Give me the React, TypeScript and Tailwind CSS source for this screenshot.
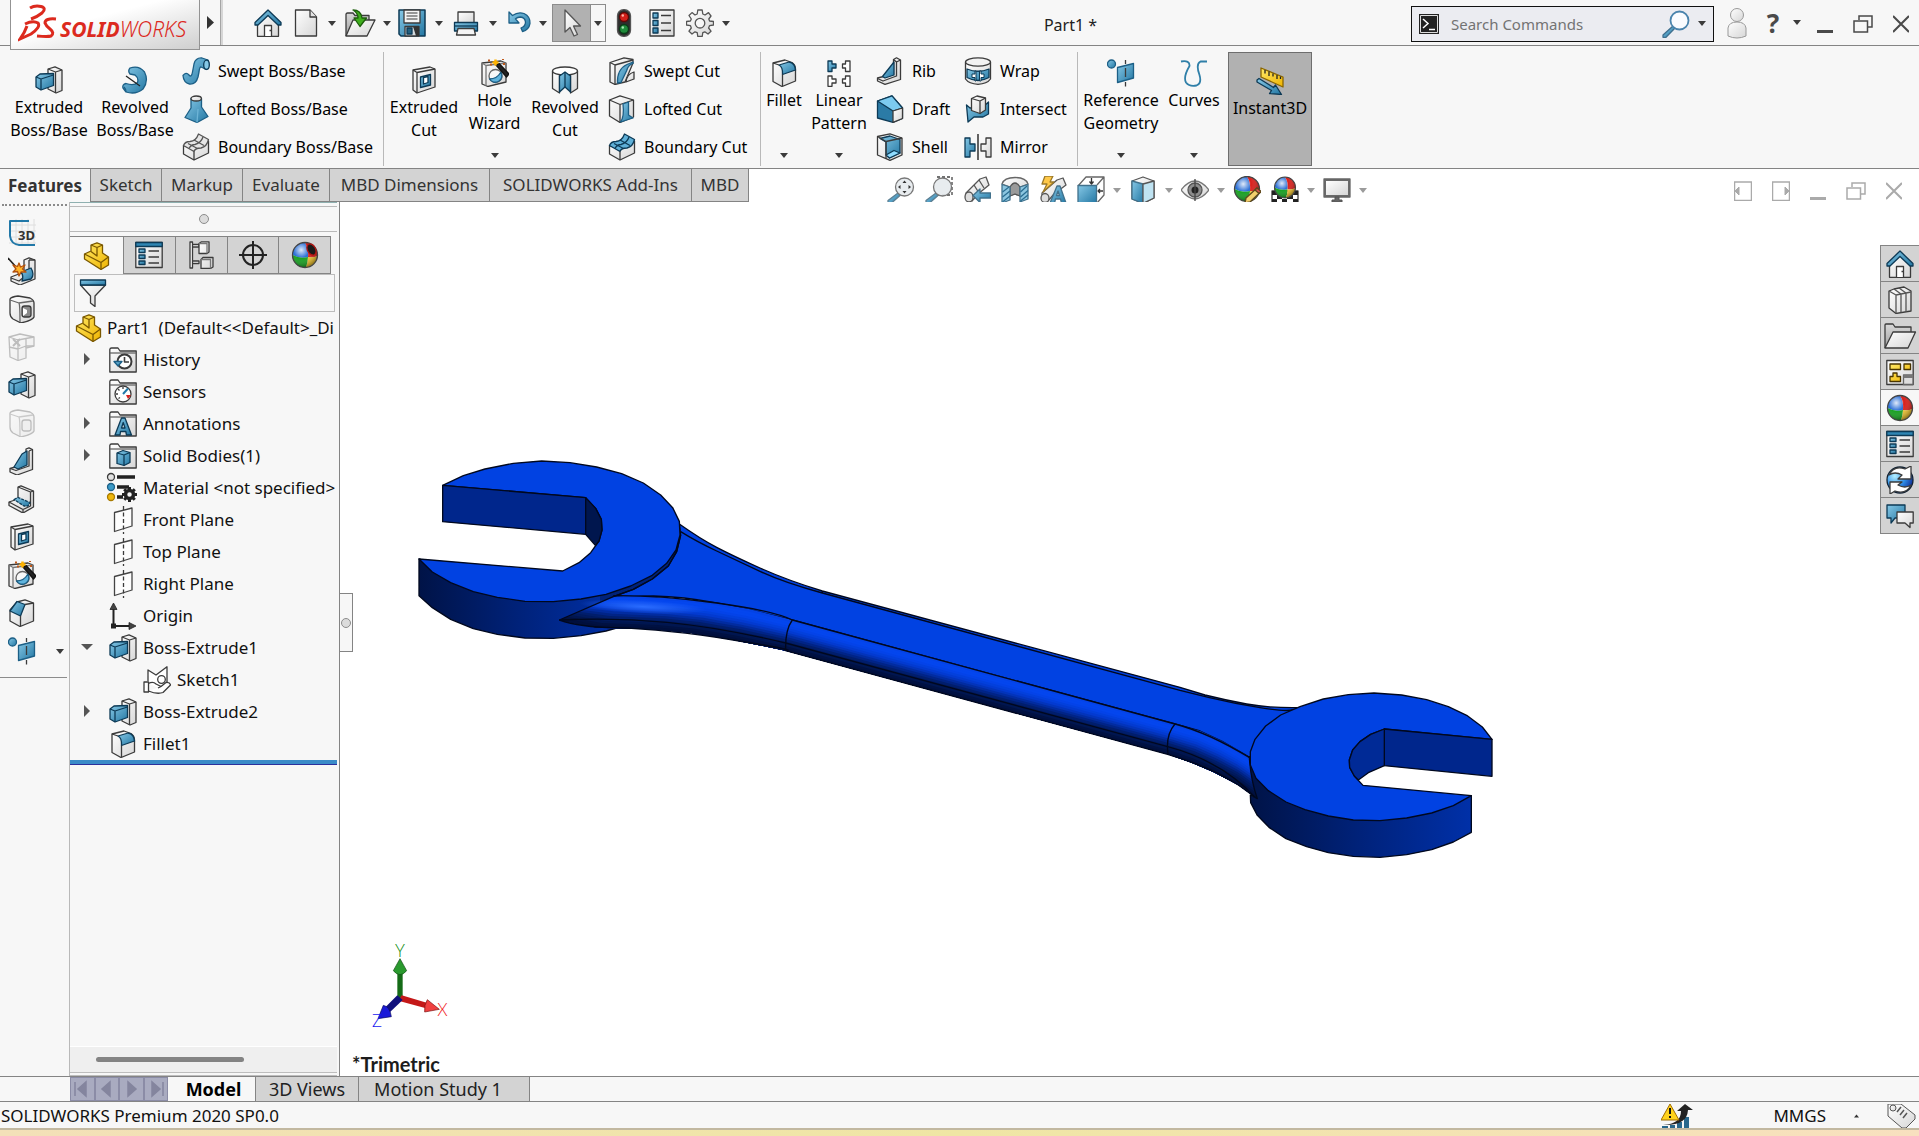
import type { FC, ReactNode } from "react";
import { clsx } from "clsx";

const BLUE = "url(#blue)";
const LIGHT = "url(#light)";
const GOLD = "url(#gold)";
const NAVY = "#0d3a56";

// Gradients shared by every icon on the page
const Gradients: FC = () => (
  <svg className="absolute w-0 h-0" aria-hidden="true">
    <defs>
      <linearGradient id="blue" x1="0" y1="0" x2="1" y2="1">
        <stop offset="0" stopColor="#86c8e6" />
        <stop offset="1" stopColor="#2377a3" />
      </linearGradient>
      <linearGradient id="light" x1="0" y1="0" x2="1" y2="1">
        <stop offset="0" stopColor="#ffffff" />
        <stop offset="1" stopColor="#d6d6d6" />
      </linearGradient>
      <linearGradient id="gold" x1="0" y1="0" x2="1" y2="1">
        <stop offset="0" stopColor="#ffe866" />
        <stop offset="1" stopColor="#efb400" />
      </linearGradient>
      <linearGradient id="gray" x1="0" y1="0" x2="0" y2="1">
        <stop offset="0" stopColor="#d8d8d8" />
        <stop offset="1" stopColor="#a2a2a2" />
      </linearGradient>
      <radialGradient id="shine" cx=".35" cy=".3" r=".7">
        <stop offset="0" stopColor="#fff" stopOpacity=".85" />
        <stop offset=".45" stopColor="#fff" stopOpacity="0" />
        <stop offset="1" stopColor="#000" stopOpacity=".35" />
      </radialGradient>
      <radialGradient id="globe" cx=".3" cy=".35" r=".8">
        <stop offset="0" stopColor="#b5f0ff" />
        <stop offset=".5" stopColor="#2f8fe8" />
        <stop offset="1" stopColor="#0a1f8c" />
      </radialGradient>
    </defs>
  </svg>
);

const Icon: FC<{
  children: ReactNode;
  className?: string;
}> = ({ children, className = "w-7 h-7" }) => (
  <svg
    viewBox="0 0 28 28"
    className={clsx("shrink-0", className)}
    fill="none"
    stroke="#3b3b3b"
    strokeWidth="1.3"
    strokeLinejoin="round"
    aria-hidden="true"
  >
    {children}
  </svg>
);

const HomeIcon = () => (
  <Icon>
    <path d="M3.500 14V27.300H24.500V14L14 4Z" fill={LIGHT} />
    <path d="M14 1 1 13.500V16H4L14 6.500 24 16H27V13.500Z" fill={BLUE} stroke={NAVY} />
    <path d="M10.500 27V16.500H17.500V27" fill="#fff" />
    <path d="M15.500 21.500H17" />
  </Icon>
);

const NewIcon = () => (
  <Icon>
    <path d="M3.500 1H18L24.500 8V27H3.500Z" fill={LIGHT} />
    <path d="M18 1V8H24.500" fill="#e4e4e4" />
  </Icon>
);

const OpenIcon = () => (
  <Icon className="w-8 h-7">
    <path d="M0 27V5.500Q0 4 1.500 4H7L9 6.500H23V11" fill="url(#gray)" />
    <path d="M0 27 7 11H29L21 27Z" fill={LIGHT} />
    <path d="M7 1Q15 1 16 9H20.500L14 17.500 8 9H12Q12 4 7 1Z" fill="#3fae1d" stroke="#1d5e0c" />
  </Icon>
);

const SaveIcon = () => (
  <Icon>
    <path d="M1 1H27V27H3L1 25Z" fill={BLUE} stroke={NAVY} strokeWidth="1.500" />
    <path d="M6 1H22V14H6Z" fill="#f4f4f4" />
    <path d="M8.500 4H19.500M8.500 7H19.500M8.500 10H19.500" stroke="#777" />
    <path d="M7 17.500H21V27H7Z" fill="#d4dadd" />
    <path d="M9 19H14V25H9Z" fill="#23607f" stroke={NAVY} />
    <path d="M15 17.500H21V27H18Z" fill="#333" stroke="none" />
  </Icon>
);

const PrintIcon = () => (
  <Icon>
    <path d="M6 14V3H22V14" fill={LIGHT} />
    <path d="M2.500 13.500H25.500V22H2.500Z" fill={BLUE} stroke={NAVY} />
    <path d="M3 17H25" stroke={NAVY} />
    <path d="M6 19.500H22L23.500 26H4.500Z" fill="#f5f5f5" />
  </Icon>
);

const UndoIcon = () => (
  <Icon>
    <path
      d="M3 14V3L6.500 6.500Q12 2.500 18 4.500 24.500 7.500 24 14.500 23 21 16.500 22.500L15 19Q19.500 17.500 19.500 13 19 8.500 14.500 8 11.500 8 9.500 9.800L13 14Z"
      fill={BLUE}
      stroke="#1c5f86"
    />
  </Icon>
);

const CursorIcon = () => (
  <Icon>
    <path d="M7 1V23L12 18.500 16 27 19.500 25.500 15.500 17H22.500Z" fill={LIGHT} stroke="#555" />
  </Icon>
);

const TrafficIcon = () => (
  <Icon>
    <rect x="7.500" y=".7" width="13" height="26.600" rx="6" fill="#2e2e2e" stroke="#555" />
    <circle cx="14" cy="8" r="4.500" fill="#d3201a" stroke="#5c0907" />
    <circle cx="14" cy="20" r="4.500" fill="#1f8b3b" stroke="#0b3a18" />
    <circle cx="12.800" cy="6.500" r="1.200" fill="#ffb3a8" stroke="none" />
    <circle cx="12.800" cy="18.500" r="1.200" fill="#a8e8b8" stroke="none" />
  </Icon>
);

const OptionsIcon = () => (
  <Icon>
    <path d="M2 1H26V27H2Z" fill={LIGHT} />
    <path d="M5 4H10V9H5ZM5 11.500H10V16.500H5ZM5 19H10V24H5Z" fill={BLUE} stroke={NAVY} />
    <path d="M13 6.500H23M13 14H23M13 21.500H23" />
  </Icon>
);

const GearIcon = () => (
  <Icon>
    <path
      d="M11.800 1H16.200L16.800 5 19 6 22.500 3.600 25 7 22.800 10 23.600 12 27.500 12.500V16L23.600 16.600 22.600 19 25 22.200 22 25 18.800 22.800 16.800 23.600 16.200 27.500H11.800L11.200 23.600 9 22.800 6 25 3 22.200 5.300 19 4.400 16.600.5 16V12.500L4.400 12 5.300 10 3 6.500 6 3.600 9 6 11.200 5Z"
      fill={LIGHT}
      stroke="#555"
    />
    <circle cx="14" cy="14.200" r="4.800" fill="#f7f7f7" stroke="#555" />
  </Icon>
);

const ExtrudeIcon = () => (
  <Icon>
    <path d="M13 3 20 .800 27 4V24.500L21 27 13 23Z" fill={LIGHT} />
    <path d="M13 3 20.500 6V27M20.500 6 27 4" />
    <path d="M1 11 5 8 18.500 7.500V19.500L6 24 1 21Z" fill={BLUE} stroke={NAVY} />
    <path d="M1 11 6 13V24M6 13 18.500 9" stroke={NAVY} />
  </Icon>
);

const RevolveIcon = () => (
  <Icon>
    <path
      d="M9 2Q18-1 23.500 6 28 15 22 23 15 29 5 26L2 22Q1 18.500 5 17.500 13 20 16.500 16.500 18 12 14 9L9 8Q6.500 5 9 2Z"
      fill={BLUE}
      stroke="#1c5f86"
    />
    <path d="M5 10 19 20" stroke="#222" />
    <path d="M3 21Q5 23 5 26" stroke="#1c5f86" />
  </Icon>
);

const SweptIcon = () => (
  <Icon>
    <path
      d="M1 18.500Q4 14.500 7 18 9.500 21 10.500 15L12 7Q13.500.500 20 1L26 3 27 8 24.500 12.500 19 10Q17.500 10 17 15L16 20Q14 27.500 7.500 27 1.500 25.500 1 18.500Z"
      fill={BLUE}
      stroke="#1c5f86"
    />
    <ellipse cx="24.500" cy="7.800" rx="2.800" ry="4.600" fill="#86c8e6" stroke={NAVY} />
  </Icon>
);

const LoftIcon = () => (
  <Icon>
    <path d="M9 3.500V13L3 22.500 15 27.500 26 21.500 19.500 12V3.500Z" fill={BLUE} stroke="#1c5f86" />
    <path d="M15 27.500 16 14" stroke="#6db4d6" />
    <ellipse cx="14.200" cy="3.500" rx="5.200" ry="2.500" fill={LIGHT} />
  </Icon>
);

const Patch: FC<{ fill: string; stroke?: string }> = ({
  fill,
  stroke = "#555",
}) => (
  <Icon>
    <path d="M1.500 12.500 1.500 21 12 27 26.500 20V8L12 17Z" fill={LIGHT} />
    <path
      d="M1.500 12.500Q3 8.500 8 8.500 14 8 16.500 1L26.500 6.500Q25 13.500 19 15 13 15 12 18.500Z"
      fill={fill}
      stroke={stroke}
    />
    <path d="M6 10.500 15.500 15.500M12 7 22 12.500M7 15.500Q9 11.500 13 11.500 19 10 21 4" stroke={stroke} />
    <path d="M12 18.500V27" />
  </Icon>
);

const CutIcon = () => (
  <Icon>
    <path d="M3 4 20 1 25 3V21L7 27 3 24Z" fill={LIGHT} />
    <path d="M3 4 7 6.500V27M7 6.500 25 3" />
    <path d="M10.500 11 20.500 8.500V19L10.500 21.500Z" fill={BLUE} stroke={NAVY} />
    <path d="M13.500 11.500 18 10.500V16.500L13.500 18Z" fill="#fff" stroke={NAVY} />
  </Icon>
);

const HoleWizardIcon = () => (
  <Icon>
    <path d="M1 4 20 2 25 4V23L7 27.500 1 25Z" fill={LIGHT} />
    <path d="M1 4 5 6.500V27M5 6.500 25 4" stroke="#777" />
    <circle cx="14.500" cy="17" r="6.500" fill="#f8f8f8" stroke="#666" />
    <path d="M20 13A6.500 6.500 0 1 1 8.500 20Q16 20 20 13Z" fill="#5fb3dc" stroke="#1c5f86" />
    <path d="M15 6 18 4.500 28 15 25.500 18Z" fill="#222" stroke="#111" />
    <path d="M14.500.5V6.500M11.500 3.500H17.500" stroke="#ffb300" strokeWidth="2.500" />
    <path d="M7 1.500H9M21 0H23M22 5H24M9 5.500H11" stroke="#c0591a" strokeWidth="2" />
  </Icon>
);

const RevolvedCutIcon = () => (
  <Icon>
    <path d="M1.500 5V22.500L8.500 27V9L14 7 19.500 9V27L26.500 22.500V5" fill={LIGHT} />
    <ellipse cx="14" cy="5" rx="12.500" ry="4" fill="#fff" />
    <path d="M8.500 10 14 6 19.500 10V26L14 21 8.500 26Z" fill={BLUE} stroke={NAVY} />
    <path d="M14 6V21" stroke={NAVY} />
  </Icon>
);

const SweptCutIcon = () => (
  <Icon>
    <path d="M2 5.500 16 .8 25 2.500V6L17 25 7 27.500 2 25Z" fill={LIGHT} />
    <path d="M2 5.500 7 8V27.500M7 8 25 3" />
    <path d="M25 6.500Q20 8 18.500 14L13 25.500 9.500 26Q9 12 19 7.500L25 5Z" fill={BLUE} stroke="#1c5f86" />
    <path d="M26 15Q19 17 18 25L26 22Z" fill={LIGHT} />
  </Icon>
);

const LoftedCutIcon = () => (
  <Icon>
    <path d="M1.500 5 12 .8 25.500 5V22L12 27.500 1.500 21Z" fill={LIGHT} />
    <path d="M1.500 5 12 9.500V27.500M12 9.500 25.500 5" />
    <path d="M15 9 20.500 7V20L25 23 12.500 27Q16.500 22 15 9Z" fill={BLUE} stroke="#1c5f86" />
  </Icon>
);

const FilletIcon = () => (
  <Icon>
    <path d="M3 4 15 1 22 3.500Q25.500 6 25.500 10V22L12 27.500 3 22.500Z" fill={LIGHT} />
    <path d="M9 6 19 3Q25 4 25.500 11L12.500 15.500Q13 8 9 6Z" fill={BLUE} stroke={NAVY} />
    <path d="M3 4 9 6M12.500 15.500V27" />
  </Icon>
);

const LinearPatternIcon = () => (
  <Icon>
    <path d="M3 2H7V5H11V9H7V12.500H3Z" fill={BLUE} stroke={NAVY} />
    <path d="M17.500 5H20.500V2H25V12.500H20.500V9H17.500ZM3 17H7V20H11V24H7V27.300H3ZM17.500 20H20.500V17H25V27.300H20.500V24H17.500Z" fill="#fff" />
  </Icon>
);

const RibIcon = () => (
  <Icon>
    <path d="M17.500 2.500 20.500 .8 24.500 3V22.500L9 27.300 1.500 24V21L17.500 17Z" fill={LIGHT} />
    <path d="M17.500 2.500 20.500 5V19L7 24 1.500 21.500M20.500 5 24.500 3" />
    <path d="M18 5V18L9 21 6.500 19.500Z" fill={BLUE} stroke={NAVY} />
  </Icon>
);

const DraftIcon = () => (
  <Icon>
    <path d="M1.500 6 16 .8 26.500 13V23.500L17 27.300 1.500 23Z" fill="#2b7ba6" stroke={NAVY} />
    <path d="M1.500 6 16 .8 26.500 13 17 16Z" fill="#7ccbf0" stroke={NAVY} />
    <path d="M17 16 26.500 13V23.500L17 27.300Z" fill={LIGHT} />
  </Icon>
);

const ShellIcon = () => (
  <Icon>
    <path d="M1.500 3.500 14 .8 26 5V22L14 27.300 1.500 22Z" fill={LIGHT} />
    <path d="M4 5.500 14 3 24 6.500V20L13.500 25 10 22V9Z" fill={BLUE} stroke={NAVY} />
    <path d="M10 22 18 17.500 24 20 13.500 25Z" fill="#8fdcff" stroke={NAVY} />
    <path d="M1.500 3.500 10 8.500V26M10 8.500 26 5" />
  </Icon>
);

const WrapIcon = () => (
  <Icon>
    <path d="M1.500 5V22Q5 27 14 27.300 23 27 26.500 22V5" fill={LIGHT} />
    <ellipse cx="14" cy="5" rx="12.500" ry="4.200" fill="#f2f2f2" />
    <path d="M3 12Q14 16.500 25 12V20.500Q14 26.500 3 20.500Z" fill={BLUE} stroke={NAVY} />
    <path d="M11 14V17H8V20.500H11V24H12V14ZM17 14V17H20V20.500H17V24H15.500V14Z" fill="#fff" stroke={NAVY} strokeWidth="1" />
  </Icon>
);

const IntersectIcon = () => (
  <Icon>
    <path d="M2.500 10 6 13 19 12 24.500 7V19L19 22 10 22 4 27Z" fill={BLUE} stroke={NAVY} />
    <path d="M7.500 3.500 13 1 21.500 3V15L16 18.500 7.500 15.500Z" fill={LIGHT} />
    <path d="M7.500 3.500 16 6V18.500M16 6 21.500 3" />
  </Icon>
);

const MirrorIcon = () => (
  <Icon>
    <path d="M1 5H6V11H11V18H6V24H1Z" fill={BLUE} stroke={NAVY} />
    <path d="M27 5H22V11H17V18H22V24H27Z" fill={LIGHT} />
    <path d="M14 1V27" stroke="#111" />
  </Icon>
);

const GeometryIcon = () => (
  <Icon>
    <circle cx="4.500" cy="5" r="4" fill={BLUE} stroke="#1c5f86" />
    <path d="M10.500 8.500 26.500 4.500V19L10.500 23.500Z" fill={BLUE} stroke="#1c5f86" />
    <path d="M18.500 1V5M18.500 9V18M18.500 23V27.500" />
  </Icon>
);

const CurvesIcon = () => (
  <Icon>
    <path
      d="M1 2.500Q10 1 9.500 7 3 18 6 23.500 9.500 28 16.500 26.500 22 24.500 19.500 16 15.500 5 20.500 2.500L27 2.500"
      stroke="#2f7fa8"
      strokeWidth="1.800"
    />
  </Icon>
);

const Instant3DIcon = () => (
  <Icon>
    <path d="M5 1 27 10V20L5 10Z" fill={GOLD} stroke="#8a6500" />
    <path d="M9 3V6.500M13 4.500V9M17 6.500V9.500M21 8V12M24.500 9.500V12" stroke="#222" />
    <path d="M1 13 3 11.500 17.500 20.500 19.500 18 25.500 27.500 13.500 26.500 15.500 23.500 1 15Z" fill={BLUE} stroke={NAVY} />
  </Icon>
);

const ZoomFitIcon: FC<{ area?: boolean }> = ({ area }) => (
  <Icon>
    {area && <path d="M12 1H27V19H12" strokeDasharray="3 2" stroke="#444" />}
    <path d="M11 17 13 19.500 4 27.500 1 27 1 24.500Z" fill={BLUE} stroke="#5d7f92" />
    <circle cx="17.500" cy="11" r="9" fill="#e6eaed" fillOpacity=".9" stroke="#777" />
    {!area && (
      <path
        d="M17.500 4.500 19.500 7H15.500ZM17.500 17.500 19.500 15H15.500ZM11 11 13.500 9V13ZM24 11 21.500 9V13Z"
        fill="#333"
        stroke="none"
      />
    )}
  </Icon>
);

const PreviousViewIcon = () => (
  <Icon>
    <path d="M17 3 23 1 26 9 15 18 9 25 3 22 3 17Z" fill={LIGHT} stroke="#555" />
    <path d="M16 4 21 12M11 9 16 17" stroke="#555" />
    <ellipse cx="6" cy="21" rx="4" ry="5" fill="#ddd" stroke="#555" />
    <path d="M10 19.500 17 13V17H27.500V22H17V26.500Z" fill={BLUE} stroke="#41718c" />
  </Icon>
);

const SectionIcon = () => (
  <Icon>
    <path d="M1 8Q3 1.500 14 1.500 25 1.500 27 8L19 11V20L14 18 9 20V11Z" fill={LIGHT} stroke="#666" />
    <path d="M9 11Q14 3 19 11V20L14 18 9 20Z" fill="#9a9a9a" stroke="#555" />
    <path d="M1 8.500 9 11V24L1 27ZM19 11 27 8.500V23L19 26Z" fill="#8cc6e0" stroke="#41718c" />
    <path d="M1.500 16 8 11M1.500 21 9 15M1.500 26 9 20M19.500 16 26 10M19.500 21 27 14.500M19.500 25 27 19" stroke="#2b6e92" />
  </Icon>
);

const AnnotationViewIcon = () => (
  <Icon>
    <path d="M18 4 24 2 27 9 15 18 9 25 3 22 3 17Z" fill={LIGHT} stroke="#555" />
    <ellipse cx="6" cy="22" rx="4" ry="4.500" fill="#ddd" stroke="#555" />
    <path d="M6 0H14L11 6H15L4 16 8 8H3Z" fill="#ffc94a" stroke="#9c7a2a" />
    <path d="M11 27 18 10H21L27 27H22.500L21.500 23H16.500L15.500 27ZM17.500 19.500H20.500L19 15Z" fill={BLUE} stroke="#41718c" />
  </Icon>
);

const OrientationIcon = () => (
  <Icon>
    <path d="M1 10 9 1H27V19L20 27M20 9 27 1" stroke="#666" />
    <path d="M1 9.500H19.500V27H1Z" fill={BLUE} stroke="#41718c" />
    <path d="M14.500 2V8M12.500 5.500 14.500 8 16.500 5.500M26 15H21M23 13 21 15 23 17" stroke="#333" />
  </Icon>
);

const DisplayStyleIcon = () => (
  <Icon>
    <path d="M3 5 14 1 25 5V22L14 27.300 3 23Z" fill={LIGHT} stroke="#555" />
    <path d="M3 5 14 8V27.300L3 23Z" fill={BLUE} stroke="#41718c" />
    <path d="M14 8 25 5V22L14 27.300Z" fill="#bfe3f2" stroke="#555" />
  </Icon>
);

const EyeIcon = () => (
  <Icon>
    <path d="M0 14Q7 5 14 5 21 5 28 14 21 23 14 23 7 23 0 14Z" fill={LIGHT} stroke="#777" />
    <circle cx="14" cy="14" r="7" fill="#8c8c8c" stroke="#555" />
    <circle cx="14" cy="14" r="3.500" fill="#222" stroke="none" />
    <path d="M14 3V25" stroke="#444" />
  </Icon>
);

const Ball: FC<{ r?: number; cy?: number }> = ({ r = 12.5, cy = 14 }) => (
  <g transform={`translate(14 ${cy}) scale(${r / 12.5})`} stroke="none">
    <path d="M-12.500 0A12.500 12.500 0 0 1 0-12.500Q4-6 3 2-5 4-12.500 0Z" fill="#2b6fd6" />
    <path d="M0-12.500A12.500 12.500 0 0 1 12.500 1Q8 3 3 2 4-6 0-12.500Z" fill="#d8201c" />
    <path d="M-12.500 0A12.500 12.500 0 0 0 1 12.500Q3 7 3 2-5 4-12.500 0Z" fill="#17a021" />
    <path d="M12.500 1A12.500 12.500 0 0 1 1 12.500Q3 7 3 2 8 3 12.500 1Z" fill="#f0c431" />
    <circle r="12.500" fill="url(#shine)" stroke="#444" />
  </g>
);

const BallIcon: FC<{ hole?: boolean }> = ({ hole }) => (
  <Icon>
    <Ball />
    {hole && <ellipse cx="20.500" cy="8.500" rx="4" ry="6" fill="#1a1a1a" stroke="#b01512" transform="rotate(-30 20.5 8.5)" />}
  </Icon>
);

const AppearanceIcon = () => (
  <Icon>
    <Ball cy={13} />
    <path d="M12 27 13 22 24 12 28 15.500 17 26Z" fill="#f2cf6d" stroke="#5e4a1c" />
    <path d="M24 12 28 15.500 26 17.500 22 14Z" fill="#d9534f" stroke="#5e4a1c" />
  </Icon>
);

const SceneIcon = () => (
  <Icon>
    <path d="M1 15H27V27.500H1Z" fill="#fff" />
    <path d="M1 15H6V19H1ZM11 15H16V19H11ZM22 15H27V19H22ZM6 19H11V23H6ZM16 19H22V23H16ZM1 23H6V27.500H1ZM11 23H16V27.500H11ZM22 23H27V27.500H22Z" fill="#222" stroke="none" />
    <Ball r={10.5} cy={11.5} />
  </Icon>
);

const MonitorIcon = () => (
  <Icon>
    <path d="M1 3H27V21H1Z" fill="#6a6a6a" stroke="#666" />
    <path d="M3 5H25V19H3Z" fill={LIGHT} stroke="none" />
    <path d="M12 21H16V24H19V26H9V24H12Z" fill="#666" stroke="#555" strokeWidth="1" />
  </Icon>
);

const Sketch3DIcon = () => (
  <Icon>
    <path d="M8 0V27M14 0V27M20 0V27M26 0V27M1 6H28M1 12H28M1 18H28M1 24H28" stroke="#dedede" strokeWidth="1" />
    <path d="M21 2H2V17Q3 25 11 26H27" stroke="#2178a8" strokeWidth="2" />
    <text x="10" y="21" fontSize="13" fontWeight="700" fill="#333" stroke="none" fontFamily="Noto Sans, sans-serif">
      3D
    </text>
  </Icon>
);

const WeldIcon = () => (
  <Icon>
    <path d="M16 3 21 .8 27 3V22L12 28 3 24V20L16 15Z" fill={LIGHT} />
    <path d="M21 3V16L11 24 3 21M21 3 27 3" />
    <path d="M13 15 23 11Q27 18 23 22L14 24Q16 19 13 15Z" fill={BLUE} stroke={NAVY} />
    <path d="M0 1 9 11" stroke="#222" strokeWidth="1.600" />
    <path d="M11 6 12.500 10 17 8 14.500 12 18 15 13 15 11 19 9.500 14.500 5 15 8 12 5 8 9.500 9.500Z" fill="#ffb52b" stroke="#b3510d" />
  </Icon>
);

const BoxIcon: FC<{ ghost?: boolean }> = ({ ghost }) => (
  <Icon className={clsx("w-7 h-7", ghost && "opacity-30")}>
    <path d="M2 4Q3 2 10 1L22 3Q26 5 26 8V22Q25 25 13 28L5 24Q2 22 2 18Z" fill={LIGHT} />
    <path d="M2 5 11 8 25 6M11 8Q12 10 12 27" stroke="#666" />
    <rect x="14" y="11" width="9" height="11" rx="2.500" fill={ghost ? "#ddd" : "#8a8a8a"} />
    {!ghost && <path d="M15 13 19 15V18L15 21Z" fill="#fff" stroke="none" />}
  </Icon>
);

const GhostPatternIcon = () => (
  <Icon className="w-7 h-7 opacity-30">
    <path d="M1 4 12 1 26 4V13L18 15V25L10 27.500 2 24Z" fill={LIGHT} />
    <path d="M1 14 10 16 18 13 26 13M10 6V27M18 5V15M1 4 10 7 26 4" />
    <path d="M5 6 12 13M12 6 5 13" strokeWidth="2" />
  </Icon>
);

const BaseFlangeIcon = () => (
  <Icon>
    <path d="M10 2 13 .8 25.500 6V22L15 28 1 20.500V17L10 14Z" fill={LIGHT} />
    <path d="M10 2 22.500 7V21L15 24.500 1 17M22.500 7 25.500 6M15 24.500V28" />
    <path d="M6 14.500 10 12.500 22 17.500 20 21 16 21Z" fill={BLUE} stroke={NAVY} strokeDasharray="3 1" />
  </Icon>
);

const RibBlueIcon = () => (
  <Icon>
    <path d="M18 2 21 .8 24.500 2.500V22.500L9 28 2 25V21.500L18 17Z" fill={LIGHT} />
    <path d="M21 4V19L8 23.500 2 21.500M21 4 24.500 2.500" />
    <path d="M14 7 19 4V18L10 22 6 20Z" fill={BLUE} stroke={NAVY} />
  </Icon>
);

const ChamferIcon = () => (
  <Icon>
    <path d="M9 3 17 .8 25.500 4V22L12 27.500 2 22V11Z" fill={LIGHT} />
    <path d="M9 2.500 17 5.500 12.500 17 2 12Z" fill={BLUE} stroke={NAVY} />
    <path d="M17 5.500 25.500 4M12.500 17V27" />
  </Icon>
);

const PartIcon = () => (
  <Icon>
    <path d="M1.500 12 8 9V3L14 .8 19.500 3V11L25.500 15V23L18 27.500 1.500 17Z" fill={GOLD} stroke="#7a5800" />
    <path d="M8 3 14 5.500 19.500 3M14 5.500V14L8 9.500M1.500 12 18 20.500 25.500 15M18 20.500V27.500" stroke="#7a5800" />
  </Icon>
);

const PropertyIcon = () => (
  <Icon>
    <path d="M.8 1.500H27.200V26.500H.8Z" fill={LIGHT} />
    <path d="M.8 1.500H27.200V5.500H.8Z" fill="#2f86b3" stroke={NAVY} />
    <path d="M4 8H10V11.500H4ZM4 14H10V17.500H4ZM4 20H10V23.500H4Z" fill={BLUE} stroke={NAVY} />
    <path d="M13.500 10H24M13.500 16H24M13.500 22H24" />
  </Icon>
);

const ConfigIcon = () => (
  <Icon>
    <path d="M3 1H5.500V27H3ZM5.500 3.500H12V6H5.500ZM5.500 20H12V22.500H5.500Z" fill="#fff" />
    <path d="M12 2.500 14.500 .8H22V11L20 12.500H12ZM14 18.500 16 16.500H26V26L23.500 27.500H14Z" fill={LIGHT} />
    <path d="M12 2.500H20V12.500M14 18.500H23.500V27.500" stroke="#777" />
  </Icon>
);

const CrosshairIcon = () => (
  <Icon>
    <circle cx="14" cy="14" r="10" strokeWidth="2" stroke="#222" />
    <path d="M14 0V28M0 14H28" strokeWidth="2" stroke="#222" />
  </Icon>
);

const FilterIcon = () => (
  <Icon>
    <path d="M1.500 6 11.500 17V24L16 27.500V17L26.500 6Z" fill={LIGHT} />
    <path d="M1.500 1H26.500V6H1.500Z" fill={BLUE} stroke={NAVY} />
  </Icon>
);

const Folder: FC<{ children: ReactNode }> = ({ children }) => (
  <Icon>
    <path d="M.8 26V3.500Q1 2 2.500 2H9L11 5H27.200V26Z" fill={LIGHT} />
    <path d="M1 7H27" stroke="#666" />
    {children}
  </Icon>
);

const HistoryIcon = () => (
  <Folder>
    <circle cx="15.500" cy="15.500" r="7" fill="#fff" strokeWidth="2" />
    <path d="M15.500 11V16H20" strokeWidth="1.600" />
    <path d="M5 15.500H13L9 20Z" fill={BLUE} stroke="#1c5f86" />
  </Folder>
);

const SensorIcon = () => (
  <Folder>
    <circle cx="14" cy="16" r="8" fill="#fff" />
    <path d="M14 16 19 10.500" stroke="#2178a8" strokeWidth="2" />
    <path d="M17 17H22L19 21Z" fill="#d8201c" stroke="none" />
    <path d="M14 9V11M7 16H9M9 11 10.500 12.500M9.500 20.500 11 19.500" />
  </Folder>
);

const LetterIcon = () => (
  <Folder>
    <path d="M6 25 12.500 8H16L22.500 25H17.500L16.800 21.500H11.500L11 25ZM12.500 18H16L14.200 12.500Z" fill={BLUE} stroke={NAVY} />
  </Folder>
);

const BodiesIcon = () => (
  <Folder>
    <path d="M8 11 14 8.500 21 10.500V20.500L15 23.500 8 21.500Z" fill={BLUE} stroke={NAVY} />
    <path d="M8 11 15 13V23.500M15 13 21 10.500" stroke={NAVY} />
  </Folder>
);

const MaterialIcon = () => (
  <Icon className="w-7 h-7 overflow-visible">
    <circle cx="2" cy="3" r="3.500" fill="#e3e3e3" />
    <circle cx="2" cy="13" r="3.500" fill="#3b9bc9" stroke="#1c5f86" />
    <circle cx="2" cy="23" r="3.500" fill="#f0b80c" stroke="#a87a00" />
    <path d="M8 3H26M8 13H20M8 23H14" stroke="#222" strokeWidth="3.500" />
    <path d="M20.500 13V28M13 20.500H28M15.200 15.200 25.800 25.800M25.800 15.200 15.200 25.800" stroke="#222" strokeWidth="3" />
    <circle cx="20.500" cy="20.500" r="4" fill="#f7f7f7" stroke="#222" strokeWidth="3.500" />
  </Icon>
);

const PlaneIcon = () => (
  <Icon>
    <path d="M5.500 6.500 23 2V20L5.500 25.500Z" fill="#fdfdfd" stroke="#444" />
    <path d="M14.500 0V28" strokeDasharray="4 2.500" />
  </Icon>
);

const OriginIcon = () => (
  <Icon>
    <path d="M4.500 24V6M6 24H22" stroke="#222" strokeWidth="2" />
    <path d="M1 7.500 4.500 1 8 7.500ZM20 20.500 27 24 20 27.500Z" fill="#444" stroke="#222" strokeWidth=".8" />
    <path d="M2 21.500H7V26.500H2Z" fill="#222" stroke="none" />
  </Icon>
);

const SketchIcon = () => (
  <Icon>
    <path d="M5 15V4L13 9 24 .8V20" fill="#fff" />
    <circle cx="18.500" cy="13.500" r="3.800" fill="#fff" />
    <path d="M1 16H5.500V26H1ZM5.500 17.500Q10 15 13 18L18 20.500 15 22M18 20.500 23 16.500Q27 16 27.500 19L20 26.500Q14 28.500 5.500 25" fill="#fff" />
  </Icon>
);

const BooksIcon = () => (
  <Icon>
    <path d="M3 5 8 3 13 2 18 1 25 5V25L10 27.500 3 22Z" fill={LIGHT} />
    <path d="M3 5 10 9V27.500M10 9 25 6M8 3 15 8V26.500M13 2 20 7V26" stroke="#555" />
  </Icon>
);

const FolderOpenIcon = () => (
  <Icon className="w-8 h-7 overflow-visible">
    <path d="M-1 26V3Q-1 2 0 2H7L9 5H25V10" fill="url(#gray)" />
    <path d="M-1 26 7 10H29.500L22 26Z" fill={LIGHT} />
  </Icon>
);

const PaletteIcon = () => (
  <Icon>
    <path d="M.8 2.500H27.200V26.500H.8Z" fill={LIGHT} />
    <path d="M4 6H14.500V11.500H4ZM18 6H24.500V11.500H18ZM4 23.500V18.500H7V15H11V18.500H14.500V23.500Z" fill={GOLD} stroke="#4a3500" />
    <path d="M17.500 17H27V26.500H17.500Z" fill="#ddd" stroke="#666" />
    <path d="M17.500 17H27V20H17.500Z" fill="#777" stroke="none" />
  </Icon>
);

const SyncIcon = () => (
  <Icon>
    <circle cx="14" cy="14" r="13" fill="url(#globe)" stroke="#123" />
    <path d="M3 9Q8-1 19 3L25 0V13H12L16 9Q9 5 3 9ZM25 19Q20 29 9 25L4 28V16H16L12 19Q19 23 25 19Z" fill="#fff" />
  </Icon>
);

const ChatIcon = () => (
  <Icon>
    <path d="M1 3H19V16H9L5 21V16H1Z" fill={BLUE} stroke={NAVY} />
    <path d="M11 10H27.200V21H24V25.500L19 21H11Z" fill={LIGHT} />
  </Icon>
);

const Caret: FC<{ className?: string }> = ({ className = "text-[#3b3b3b]" }) => (
  <svg viewBox="0 0 8 5" className={clsx("w-2 h-[5px] shrink-0", className)} fill="currentColor" aria-hidden="true">
    <path d="M0 0H8L4 5Z" />
  </svg>
);

const IconButton: FC<{
  label: string;
  children: ReactNode;
  className?: string;
}> = ({ label, children, className }) => (
  <button aria-label={label} className={clsx("flex items-center justify-center", className)}>
    {children}
  </button>
);

const Logo: FC = () => (
  <div className="relative z-10 flex self-start w-[190px] h-[50px] pl-[7px] shrink-0 border border-t-0 border-[#939393] bg-linear-to-br from-white from-40% to-[#cfcfcf] text-[#dc2a1e]">
    <svg viewBox="0 0 40 46" className="w-10 h-[46px] shrink-0" fill="none" stroke="currentColor" strokeWidth="3" aria-hidden="true">
      <path d="M12 8Q17 5 23 6.500 29 8 24 13 19 17 13 19" />
      <path d="M7 24Q15 20 20 23 23 27 13 34L2 39Q7 32 9 26" />
      <path d="M38 19Q27 18 27 23 28 26 32 29 37 33 33 36 30 37 19 36" />
    </svg>
    <span className="pt-[13px] ml-[2px] text-[21px] leading-8 italic">
      <b>SOLID</b>
      <span className="font-light">WORKS</span>
    </span>
  </div>
);

const WindowButtons: FC<{ className?: string }> = ({ className }) => (
  <div className={clsx("flex items-center gap-5", className)}>
    <IconButton label="Minimize" className="w-4 h-5">
      <svg viewBox="0 0 16 20" className="w-4 h-5" fill="currentColor">
        <path d="M0 16H16V19H0Z" />
      </svg>
    </IconButton>
    <IconButton label="Restore" className="w-5 h-5">
      <svg viewBox="0 0 20 20" className="w-5 h-5" fill="none" stroke="currentColor" strokeWidth="1.500">
        <path d="M6 6V2H19V13H15M1 7H14.500V18H1Z" />
      </svg>
    </IconButton>
    <IconButton label="Close" className="w-4 h-5">
      <svg viewBox="0 0 16 20" className="w-4 h-5" fill="none" stroke="currentColor" strokeWidth="2">
        <path d="M0 2 16 18M16 2 0 18" />
      </svg>
    </IconButton>
  </div>
);

const TitleBar: FC = () => (
  <header className="flex items-center h-[46px] border-b border-[#848484] px-[10px]">
    <Logo />
    <IconButton label="Expand menu" className="w-5 h-full">
      <svg viewBox="0 0 7 13" className="w-[7px] h-[13px]" fill="#333">
        <path d="M0 0 7 6.500 0 13Z" />
      </svg>
    </IconButton>
    <div className="w-[3px] h-full border-l border-[#a5a5a5] bg-[#d6d6d6]" />
    <div className="flex items-center pl-[31px] pt-px">
      <IconButton label="Home"><HomeIcon /></IconButton>
      <div className="flex items-center pl-[10px]">
        <IconButton label="New"><NewIcon /></IconButton>
        <IconButton label="New options" className="w-6"><Caret /></IconButton>
        <IconButton label="Open"><OpenIcon /></IconButton>
        <IconButton label="Open options" className="w-[22px]"><Caret /></IconButton>
        <IconButton label="Save"><SaveIcon /></IconButton>
        <IconButton label="Save options" className="w-[26px]"><Caret /></IconButton>
        <IconButton label="Print"><PrintIcon /></IconButton>
        <IconButton label="Print options" className="w-[26px]"><Caret /></IconButton>
        <IconButton label="Undo"><UndoIcon /></IconButton>
        <IconButton label="Undo options" className="w-[18px]"><Caret /></IconButton>
      </div>
      <div className="flex h-[38px] border border-[#8c8c8c]">
        <IconButton label="Select" className="w-[38px] bg-[#b1b1b1] border-r border-[#8c8c8c]"><CursorIcon /></IconButton>
        <IconButton label="Select options" className="w-[14px]"><Caret /></IconButton>
      </div>
      <IconButton label="Rebuild" className="ml-1"><TrafficIcon /></IconButton>
      <IconButton label="File properties" className="ml-[10px]"><OptionsIcon /></IconButton>
      <IconButton label="Options" className="ml-[10px]"><GearIcon /></IconButton>
      <IconButton label="More options" className="w-6"><Caret /></IconButton>
    </div>
    <h1 className="flex-1 text-center text-[16px] leading-6 text-[#222] pt-1 pr-2">Part1 *</h1>
    <div className="flex items-center w-[303px] h-9 mt-[2px] border border-[#111] bg-[#ebecf1] px-[7px]">
      <svg viewBox="0 0 20 20" className="w-5 h-5 shrink-0">
        <path d="M0 0H20V20H0Z" fill="#222" />
        <path d="M1.500 1.500H18.500V18.500H1.500Z" stroke="#ddd" fill="none" />
        <path d="M4 5 9 9.500 4 14M10 15.500H16" stroke="#fff" strokeWidth="1.500" fill="none" />
      </svg>
      <input
        aria-label="Search Commands"
        placeholder="Search Commands"
        className="flex-1 min-w-0 ml-3 text-[15px] leading-6 bg-transparent outline-none placeholder:text-[#737373]"
      />
      <IconButton label="Search">
        <Icon>
          <path d="M11 16 13 18 4 27.300 1 27.300 1 25Z" fill={BLUE} stroke="#3f6f8e" />
          <circle cx="17.500" cy="10.500" r="9" fill="#fafcff" stroke="#4a84ad" strokeWidth="1.800" />
        </Icon>
      </IconButton>
      <IconButton label="Search scope" className="ml-2"><Caret /></IconButton>
    </div>
    <IconButton label="Log in" className="ml-[13px]">
      <svg viewBox="0 0 20 32" className="w-5 h-8" fill={LIGHT} stroke="#999">
        <path d="M1 29V21Q2 15 10 15 18 15 19 21V29Q10 33 1 29Z" />
        <circle cx="10" cy="8" r="6.500" />
      </svg>
    </IconButton>
    <IconButton label="Help" className="w-4 ml-[18px] text-[26px] leading-8 font-bold text-[#4a4a4a]">?</IconButton>
    <IconButton label="Help options" className="w-8"><Caret /></IconButton>
    <WindowButtons className="ml-1 pt-[2px] text-[#4a4a4a]" />
  </header>
);

const BigButton: FC<{
  icon: ReactNode;
  lines: string[];
  menu?: boolean;
  className: string;
}> = ({ icon, lines, menu, className }) => (
  <button className={clsx("flex flex-col items-center text-[16px] leading-[23px]", menu ? "pt-[7px]" : "pt-[14px]", className)}>
    {icon}
    <span className={clsx("flex flex-col pt-[2px] whitespace-nowrap", menu && "h-[66px]")}>
      {lines.map((line) => (
        <span key={line}>{line}</span>
      ))}
    </span>
    {menu && <Caret />}
  </button>
);

const SmallButton: FC<{ icon: ReactNode; label: string }> = ({ icon, label }) => (
  <button className="flex items-center gap-2 h-[38px] text-[16px] leading-[23px] whitespace-nowrap">
    {icon}
    {label}
  </button>
);

const Ribbon: FC = () => (
  <div className="flex h-[123px] pt-[6px] pb-[2px] border-b border-[#848484]">
    <div className="flex w-[384px] pl-[6px] border-r border-[#b9b9b9]">
      <BigButton icon={<ExtrudeIcon />} lines={["Extruded", "Boss/Base"]} className="w-[86px]" />
      <BigButton icon={<RevolveIcon />} lines={["Revolved", "Boss/Base"]} className="w-[86px]" />
      <div className="flex flex-col pl-1">
        <SmallButton icon={<SweptIcon />} label="Swept Boss/Base" />
        <SmallButton icon={<LoftIcon />} label="Lofted Boss/Base" />
        <SmallButton icon={<Patch fill="#e6e6e6" />} label="Boundary Boss/Base" />
      </div>
    </div>
    <div className="flex w-[377px] pl-[5px] border-r border-[#b9b9b9]">
      <BigButton icon={<CutIcon />} lines={["Extruded", "Cut"]} className="w-[70px]" />
      <BigButton icon={<HoleWizardIcon />} lines={["Hole", "Wizard"]} menu className="w-[71px]" />
      <BigButton icon={<RevolvedCutIcon />} lines={["Revolved", "Cut"]} className="w-[70px]" />
      <div className="flex flex-col pl-2">
        <SmallButton icon={<SweptCutIcon />} label="Swept Cut" />
        <SmallButton icon={<LoftedCutIcon />} label="Lofted Cut" />
        <SmallButton icon={<Patch fill="#5fb0d8" stroke={NAVY} />} label="Boundary Cut" />
      </div>
    </div>
    <div className="flex w-[317px] pl-[3px] border-r border-[#b9b9b9]">
      <BigButton icon={<FilletIcon />} lines={["Fillet"]} menu className="w-10" />
      <BigButton icon={<LinearPatternIcon />} lines={["Linear", "Pattern"]} menu className="w-[70px]" />
      <div className="flex flex-col w-[88px] pl-[2px]">
        <SmallButton icon={<RibIcon />} label="Rib" />
        <SmallButton icon={<DraftIcon />} label="Draft" />
        <SmallButton icon={<ShellIcon />} label="Shell" />
      </div>
      <div className="flex flex-col pl-[2px]">
        <SmallButton icon={<WrapIcon />} label="Wrap" />
        <SmallButton icon={<IntersectIcon />} label="Intersect" />
        <SmallButton icon={<MirrorIcon />} label="Mirror" />
      </div>
    </div>
    <div className="flex w-[150px] pl-[2px]">
      <BigButton icon={<GeometryIcon />} lines={["Reference", "Geometry"]} menu className="w-[82px]" />
      <BigButton icon={<CurvesIcon />} lines={["Curves"]} menu className="w-16" />
    </div>
    <BigButton icon={<Instant3DIcon />} lines={["Instant3D"]} className="w-[84px] bg-[#b1b1b1] border border-[#6e6e6e]" />
  </div>
);

const commandTabs = [
  { label: "Sketch", width: "w-[71px]" },
  { label: "Markup", width: "w-[81px]" },
  { label: "Evaluate", width: "w-[87px]" },
  { label: "MBD Dimensions", width: "w-[160px]" },
  { label: "SOLIDWORKS Add-Ins", width: "w-[202px]" },
  { label: "MBD", width: "w-[57px]" },
];

const ViewCaret: FC<{ label: string; className?: string }> = ({
  label,
  className = "w-6",
}) => (
  <IconButton label={label} className={className}>
    <Caret className="text-[#9b9b9b]" />
  </IconButton>
);

const CommandTabs: FC = () => (
  <div className="flex h-[33px] bg-white">
    <nav className="flex h-full text-[17px] leading-6 text-[#333] whitespace-nowrap">
      <button className="w-[91px] font-bold bg-[#f7f7f7] border-r border-[#848484]">Features</button>
      {commandTabs.map(({ label, width }) => (
        <button key={label} className={clsx("bg-[#d3d3d3] border-b border-r border-[#848484]", width)}>
          {label}
        </button>
      ))}
    </nav>
    <div className="flex items-center gap-[10px] ml-[138px] pt-[9px]">
      <IconButton label="Zoom to Fit"><ZoomFitIcon /></IconButton>
      <IconButton label="Zoom to Area"><ZoomFitIcon area /></IconButton>
      <IconButton label="Previous View"><PreviousViewIcon /></IconButton>
      <IconButton label="Section View"><SectionIcon /></IconButton>
      <IconButton label="Annotation Views"><AnnotationViewIcon /></IconButton>
      <div className="flex">
        <IconButton label="View Orientation"><OrientationIcon /></IconButton>
        <ViewCaret label="Orientation options" />
        <IconButton label="Display Style"><DisplayStyleIcon /></IconButton>
        <ViewCaret label="Style options" />
        <IconButton label="Hide/Show Items"><EyeIcon /></IconButton>
        <ViewCaret label="Visibility options" />
        <IconButton label="Edit Appearance"><AppearanceIcon /></IconButton>
        <IconButton label="Apply Scene" className="ml-[10px]"><SceneIcon /></IconButton>
        <ViewCaret label="Scene options" />
        <IconButton label="View Settings"><MonitorIcon /></IconButton>
        <ViewCaret label="View options" />
      </div>
    </div>
    <div className="flex items-center gap-5 ml-auto pr-[17px] pt-[11px] text-[#aaa]">
      <IconButton label="Previous pane">
        <svg viewBox="0 0 18 20" className="w-[18px] h-5" stroke="currentColor" fill="none">
          <path d="M.5 1H17.500V19.500H.5Z" strokeWidth="1.500" />
          <path d="M5 6V14L1 10Z" fill="currentColor" />
        </svg>
      </IconButton>
      <IconButton label="Next pane">
        <svg viewBox="0 0 18 20" className="w-[18px] h-5" stroke="currentColor" fill="none">
          <path d="M.5 1H17.500V19.500H.5Z" strokeWidth="1.500" />
          <path d="M13 6V14L17 10Z" fill="currentColor" />
        </svg>
      </IconButton>
      <WindowButtons />
    </div>
  </div>
);

const sideTools = [
  { label: "3D Sketch", icon: <Sketch3DIcon /> },
  { label: "Weldment", icon: <WeldIcon /> },
  { label: "Hollow", icon: <BoxIcon /> },
  { label: "Delete Body", icon: <GhostPatternIcon /> },
  { label: "Extrude", icon: <ExtrudeIcon /> },
  { label: "Combine", icon: <BoxIcon ghost /> },
  { label: "Gusset", icon: <RibBlueIcon /> },
  { label: "Weld Bead", icon: <BaseFlangeIcon /> },
  { label: "Cut", icon: <CutIcon /> },
  { label: "Hole", icon: <HoleWizardIcon /> },
  { label: "Chamfer", icon: <ChamferIcon /> },
];

const SideToolbar: FC = () => (
  <aside className="w-[69px] shrink-0">
    <div className="mx-[2px] mt-[2px] h-[2px] border-t-2 border-dotted border-[#8a8a8a]" />
    <div className="flex flex-col gap-[10px] pt-[13px] pl-2 pb-3 w-[67px] border-b border-[#8c8c8c]">
      {sideTools.map(({ label, icon }) => (
        <IconButton key={label} label={label} className="w-7">
          {icon}
        </IconButton>
      ))}
      <div className="flex items-center gap-5">
        <IconButton label="Reference Geometry"><GeometryIcon /></IconButton>
        <IconButton label="Reference options"><Caret /></IconButton>
      </div>
    </div>
  </aside>
);

interface TreeNode {
  label: string;
  icon: ReactNode;
  arrow?: "open" | "closed";
  child?: boolean;
}

const tree: TreeNode[] = [
  { label: "History", icon: <HistoryIcon />, arrow: "closed" },
  { label: "Sensors", icon: <SensorIcon /> },
  { label: "Annotations", icon: <LetterIcon />, arrow: "closed" },
  { label: "Solid Bodies(1)", icon: <BodiesIcon />, arrow: "closed" },
  { label: "Material <not specified>", icon: <MaterialIcon /> },
  { label: "Front Plane", icon: <PlaneIcon /> },
  { label: "Top Plane", icon: <PlaneIcon /> },
  { label: "Right Plane", icon: <PlaneIcon /> },
  { label: "Origin", icon: <OriginIcon /> },
  { label: "Boss-Extrude1", icon: <ExtrudeIcon />, arrow: "open" },
  { label: "Sketch1", icon: <SketchIcon />, child: true },
  { label: "Boss-Extrude2", icon: <ExtrudeIcon />, arrow: "closed" },
  { label: "Fillet1", icon: <FilletIcon /> },
];

const panelTabs = [
  { label: "Property Manager", icon: <PropertyIcon /> },
  { label: "Configuration Manager", icon: <ConfigIcon /> },
  { label: "DimXpert Manager", icon: <CrosshairIcon /> },
  { label: "Display Manager", icon: <BallIcon hole /> },
];

const Knob = () => (
  <span className="block w-[10px] h-[10px] rounded-full border border-[#8c8c8c] bg-[#dcdcdc]" />
);

const FeaturePanel: FC = () => (
  <section className="flex flex-col w-[271px] shrink-0 border-l border-[#b9b9b9] border-r border-r-[#848484] bg-[#f7f7f7]">
    <div className="mr-[2px] h-[5px] border-t border-t-[#8fb0b0] border-b border-b-[#b9b9b9]" />
    <div className="flex items-center justify-center h-[25px] mr-[2px] border-b border-b-[#b9b9b9]">
      <Knob />
    </div>
    <div className="flex h-[38px] mt-1 mr-[8px]">
      <IconButton label="Feature Manager" className="w-[53px] border-t border-[#848484]"><PartIcon /></IconButton>
      {panelTabs.map(({ label, icon }, i) => (
        <IconButton
          key={label}
          label={label}
          className={clsx("flex-1 bg-[#d3d3d3] border border-[#848484]", i > 0 && "border-l-0")}
        >
          {icon}
        </IconButton>
      ))}
    </div>
    <div className="h-[38px] ml-1 mr-1 pt-1 pl-1 border border-[#bdbdbd]">
      <IconButton label="Filter"><FilterIcon /></IconButton>
    </div>
    <div className="text-[17px] leading-6 text-[#111] whitespace-nowrap">
      <div className="flex items-center gap-1 h-8 pl-[5px]">
        <PartIcon />
        <span className="whitespace-pre">{"Part1  (Default<<Default>_Di"}</span>
      </div>
      <ul>
        {tree.map(({ label, icon, arrow, child }) => (
          <li key={label} className="flex items-center h-8">
            <span className={clsx("flex shrink-0 pl-[11px] pb-[2px]", child ? "w-[73px]" : "w-[39px]")}>
              {arrow && (
                <svg viewBox="0 0 12 12" className="w-3 h-3" fill="#555">
                  <path d={arrow === "open" ? "M0 3H12L6 9Z" : "M3 0 9 6 3 12Z"} />
                </svg>
              )}
            </span>
            <span className="flex w-[34px] shrink-0">{icon}</span>
            {label}
          </li>
        ))}
      </ul>
    </div>
    <div className="h-[5px] mr-[2px] bg-[#3a8bc8] border-b border-[#2b2f9c]" />
    <div className="flex-1" />
    <div className="flex items-center h-[26px] pl-[26px] mr-[2px] border-t border-white bg-[#efefef]">
      <span className="w-[148px] h-[5px] rounded-full bg-[#838383]" />
    </div>
    <div className="h-1 mr-[2px] border-t border-b border-[#bdbdbd]" />
  </section>
);

type Point = [number, number];

const filletTop: Point[] = [
  [640, 470], [700, 466], [850, 477], [950, 489], [1050, 508], [1177, 540],
  [2325, 852], [2400, 873], [2465, 903], [2510, 928], [2550, 954],
];
const filletBottom: Point[] = [
  [478, 540], [590, 563], [760, 568], [870, 578], [1000, 600], [1157, 632],
  [2303, 943], [2375, 968], [2440, 996], [2515, 1035], [2572, 1076],
];
// Colour of the rolled edge from its top line down to the silhouette
const filletShades = [
  "#0443e6", "#0446ee", "#0446ee", "#0443e8", "#0340dc", "#033ad0", "#0334ba",
  "#022ca0", "#012486", "#011e6c", "#011a5e", "#001650", "#001142", "#000f3c",
];

const points = (list: Point[]) => list.map((p) => p.join(",")).join(" ");

const band = (t: number) =>
  filletTop.map(([x, y], i): Point => {
    const [bx, by] = filletBottom[i];
    return [x + (bx - x) * t, y + (by - y) * t];
  });

const Wrench: FC = () => (
  <g stroke="#00081e" strokeWidth="4" strokeLinejoin="round" fill="none">
    <defs>
      <linearGradient id="leftSide">
        <stop offset="0" stopColor="#001347" />
        <stop offset=".5" stopColor="#00227a" />
        <stop offset="1" stopColor="#0030a8" />
      </linearGradient>
      <radialGradient id="glow">
        <stop offset="0" stopColor="#2a6cff" />
        <stop offset="1" stopColor="#2a6cff" stopOpacity="0" />
      </radialGradient>
    </defs>
    <path d="M57 357V467L97 503 152 538 220 566 292 583 375 594 460 595 543 587 618 573 650 564 660 440 460 440 292 440Z" fill="url(#leftSide)" />
    <path d="M600 440 842 285 830 335 805 378 757 417 700 448 640 470 600 490Z" fill="#00227a" stroke="none" />
    <path
      d="M838 252Q900 296 950 322T1080 384 1267 453L2340 742 2415 765Q2475 780 2540 792T2690 803L2620 950H2545L2465 903 2400 873 2325 852 1177 540Q1050 508 950 489T760 468L640 470 700 448 757 417 805 378 830 335 842 285Z"
      fill="#0142e2"
    />
    {filletShades.map((shade, i) => (
      <polygon
        key={i}
        points={points([...band(i / filletShades.length), ...[...filletBottom].reverse()])}
        fill={shade}
        stroke="none"
      />
    ))}
    <ellipse cx="730" cy="500" rx="190" ry="20" fill="url(#glow)" stroke="none" transform="rotate(3 730 500)" />
    <path d="M842 275Q890 305 950 333T1080 394 1267 459L2340 751 2425 772Q2500 790 2580 803T2680 809" />
    <path d="M640 467Q780 466 950 489T1177 540L2325 852Q2430 880 2550 954" />
    <path d="M478 540Q640 532 800 547T1157 609L2303 920Q2470 965 2568 1075" />
    <path d="M478 540Q540 562 645 563 800 568 1000 600T1157 632L2303 943Q2430 980 2515 1035L2572 1076" />
    <path d="M640 470 478 540M1177 540Q1155 570 1157 632M2325 852Q2296 885 2304 943M1267 453V459M2415 765V771" />
    <path d="M842 285 830 335 805 378 757 417 700 448 640 470" />
    <path
      d="M128 136 190 107 255 87 340 70 425 63 510 68 590 81 665 101 730 129 782 165 818 203 838 244 840 285 828 330 800 370 755 407 692 438 618 463 543 477 460 485 375 484 292 472 220 455 152 428 97 396 57 357 488 393 537 368 572 338 597 303 606 270 604 238 587 205 557 173Z"
      fill="#0142e2"
    />
    <path d="M128 136V245L557 283V173Z" fill="#00268c" />
    <path d="M557 173 587 205 604 238 606 270 597 303 586 316 557 283Z" fill="#00164e" />
    <g transform="translate(2280 660)">
      <path
        d="M271 405 272 428 292 466 327 502 378 536 440 560 505 578 580 589 660 592 740 584 815 569 880 546 934 517V407L660 440 400 380 268 290Q272 360 292 416Z"
        fill="url(#leftSide)"
      />
      <path
        d="M996 238 967 201 920 166 865 140 800 119 725 105 642 99 565 104 490 117 420 140 362 165 317 198 285 238 271 275 271 315 288 355 325 392 378 426 435 449 505 468 580 480 660 482 740 474 815 459 880 437 934 407 609 376 583 348 569 322 568 300 578 270 600 245 632 223 673 207Z"
        fill="#0142e2"
      />
      <path d="M673 207 996 238V349L673 317Z" fill="#00268c" />
      <path d="M673 207 632 223 600 245 578 270 568 300 569 322 583 348 595 360 625 338 673 317Z" fill="#002a96" />
    </g>
  </g>
);

const Triad: FC = () => (
  <g transform="translate(0 1674)" strokeWidth="0" fontFamily="Lato, sans-serif" fontWeight="300" fontSize="50">
    <path d="M-8 -90H8V0H-8Z" fill="#156b17" />
    <path d="M0 -118-20-82Q-10-70 0-70T20-82Z" fill="#2a9a2e" stroke="#0d4a10" strokeWidth="2" />
    <path d="M5-8 80 14 75 30-5 8Z" fill="#c41818" />
    <path d="M118 34 82 5Q72 20 74 42Z" fill="#f04040" stroke="#7a0d0d" strokeWidth="2" />
    <path d="M-8-8 8 6-36 48-50 34Z" fill="#10107c" />
    <path d="M-66 62-50 22Q-30 26-26 56Z" fill="#1a1ad8" stroke="#0a0a5c" strokeWidth="2" />
    <text x="-15" y="-122" fill="#0b8a0b">Y</text>
    <text x="112" y="54" fill="#f01818">X</text>
    <text x="-84" y="86" fill="#1818f0">Z</text>
  </g>
);

const taskTabs = [
  { label: "Resources", icon: <HomeIcon /> },
  { label: "Design Library", icon: <BooksIcon /> },
  { label: "File Explorer", icon: <FolderOpenIcon /> },
  { label: "View Palette", icon: <PaletteIcon /> },
  { label: "Appearances", icon: <BallIcon />, active: true },
  { label: "Custom Properties", icon: <PropertyIcon /> },
  { label: "Updates", icon: <SyncIcon /> },
  { label: "Forum", icon: <ChatIcon /> },
];

const Viewport: FC = () => (
  <main className="relative flex-1 min-w-0 bg-white overflow-hidden">
    <svg viewBox="-180 -714 4737 2622" className="absolute inset-0 w-full h-full" role="img" aria-label="Wrench model">
      <Wrench />
      <Triad />
    </svg>
    <div className="absolute left-0 top-[391px] flex items-center justify-center w-[13px] h-[59px] border border-l-0 border-[#848484] bg-[#f7f7f7]">
      <Knob />
    </div>
    <p className="absolute left-3 bottom-0 font-[Lato] text-[20px] leading-6 font-bold text-[#1c1c1c]">*Trimetric</p>
    <nav className="absolute right-0 top-[43px] flex flex-col w-[39px] border-l border-t border-[#848484]">
      {taskTabs.map(({ label, icon, active }) => (
        <IconButton
          key={label}
          label={label}
          className={clsx("h-9 border-b border-[#848484]", active ? "bg-[#f7f7f7]" : "bg-[#d3d3d3]")}
        >
          {icon}
        </IconButton>
      ))}
    </nav>
  </main>
);

const navArrows = [
  { label: "First tab", path: "M3 3V17M14 3V17L6 10Z" },
  { label: "Previous tab", path: "M13 3V17L5 10Z" },
  { label: "Next tab", path: "M7 3V17L15 10Z" },
  { label: "Last tab", path: "M6 3V17L14 10ZM17 3V17" },
];

const BottomTabs: FC = () => (
  <div className="flex h-[26px] pl-[70px] text-[18px] leading-6 text-[#222] border-t border-b border-[#848484]">
    <div className="flex w-[98px]">
      {navArrows.map(({ label, path }) => (
        <IconButton key={label} label={label} className="flex-1 bg-[#a9abc0] border border-[#8b8ca6]">
          <svg viewBox="0 0 20 20" className="w-5 h-5" fill="#84859e" stroke="#84859e" strokeWidth="1.500">
            <path d={path} />
          </svg>
        </IconButton>
      ))}
    </div>
    <button className="w-[88px] pl-1 font-bold text-black border-r border-[#848484]">Model</button>
    <button className="w-[103px] bg-[#d3d3d3] border-r border-[#848484]">3D Views</button>
    <button className="w-[171px] pr-3 bg-[#d3d3d3] border-r border-[#848484]">Motion Study 1</button>
  </div>
);

const StatusBar: FC = () => (
  <footer className="flex items-center h-[26px] pt-[2px] px-[1px] text-[17px] leading-6 text-[#111]">
    <span>SOLIDWORKS Premium 2020 SP0.0</span>
    <IconButton label="Performance warning" className="ml-auto">
      <svg viewBox="0 0 32 24" className="w-8 h-6">
        <path d="M1 22H7V24H1ZM9 21H14V24H9ZM16 18H21V24H16ZM23 13H28V24H23Z" fill="#28678c" />
        <path d="M2 21Q20 20 20 7L16 7 24 0 32 6H27Q26 22 2 21Z" fill="#222" />
        <path d="M9 0 18 16H0Z" fill="#ffd21c" stroke="#a06c00" strokeLinejoin="round" />
        <path d="M9 4V10M9 12V14" stroke="#111" strokeWidth="2" />
      </svg>
    </IconButton>
    <span className="ml-20">MMGS</span>
    <IconButton label="Unit system" className="w-[60px]">
      <svg viewBox="0 0 8 5" className="w-[5px] h-1" fill="#333">
        <path d="M0 5H8L4 0Z" />
      </svg>
    </IconButton>
    <IconButton label="Tags" className="mr-[2px]">
      <svg viewBox="0 0 30 24" className="w-[30px] h-6" fill={LIGHT} stroke="#555">
        <path d="M2 0V12L16 24H20L29 15V11L15 0Z" />
        <circle cx="7" cy="4" r="3" />
        <path d="M11 8 15 3M14 11 18 6M17 14 21 9" strokeWidth="1.500" />
      </svg>
    </IconButton>
  </footer>
);

export default function App() {
  return (
    <div className="flex flex-col min-h-screen bg-[#f7f7f7] font-['Noto_Sans',sans-serif] text-black">
      <Gradients />
      <TitleBar />
      <Ribbon />
      <CommandTabs />
      <div className="flex flex-1">
        <SideToolbar />
        <FeaturePanel />
        <Viewport />
      </div>
      <BottomTabs />
      <StatusBar />
      <div className="h-2 border-t-2 border-[#c2b8a0] bg-linear-to-r from-[#f3e0b8] via-[#efe6a4] to-[#f8e0bf]" />
    </div>
  );
}
